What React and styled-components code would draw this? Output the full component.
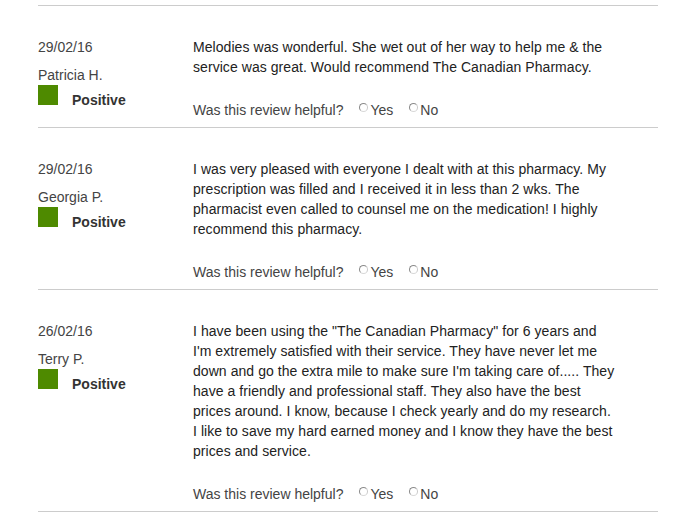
import React from 'react';
import styled, { createGlobalStyle } from 'styled-components';

const GlobalStyle = createGlobalStyle`
  body {
    margin: 0;
    background: #fff;
    font-family: 'Liberation Sans', Arial, sans-serif;
  }
`;

const List = styled.div`
  width: 620px;
  margin: 5px 0 0 38px;
  border-top: 1px solid #cccccc;
`;

const Review = styled.div`
  display: flex;
  padding: 31px 0 7px;
  border-bottom: 1px solid #cccccc;
`;

const Meta = styled.div`
  width: 155px;
  flex-shrink: 0;
  font-size: 14px;
  line-height: 20px;
  color: #444;
`;

const DateText = styled.div``;

const Author = styled.div`
  margin-top: 8px;
`;

const Rating = styled.div`
  display: flex;
  align-items: flex-start;
`;

const Swatch = styled.span`
  width: 20px;
  height: 20px;
  background: ${(p) => p.color};
`;

const RatingLabel = styled.span`
  margin: 5px 0 0 14px;
  font-weight: bold;
  color: #333;
`;

const Body = styled.div`
  width: 450px;
  font-size: 14px;
  line-height: 20px;
  letter-spacing: 0.06px;
`;

const Text = styled.p`
  margin: 0;
  color: #222;
`;

const Line = styled.span`
  display: block;
  white-space: nowrap;
`;

const Helpful = styled.div`
  display: flex;
  align-items: center;
  margin-top: 23px;
  color: #444;
  letter-spacing: 0;
`;

const Option = styled.label`
  display: inline-flex;
  align-items: center;
  margin-left: ${(p) => p.gap}px;
`;

const Radio = styled.span`
  width: 7px;
  height: 7px;
  margin: -5px 2px 0 0;
  border: 1px solid #8a8a8a;
  border-right-color: #c8c8c8;
  border-bottom-color: #d8d8d8;
  border-radius: 50%;
  background: #fff;
`;

const reviews = [
  {
    date: '29/02/16',
    name: 'Patricia H.',
    lines: [
      'Melodies was wonderful. She wet out of her way to help me & the',
      'service was great. Would recommend The Canadian Pharmacy.',
    ],
  },
  {
    date: '29/02/16',
    name: 'Georgia P.',
    lines: [
      'I was very pleased with everyone I dealt with at this pharmacy. My',
      'prescription was filled and I received it in less than 2 wks. The',
      'pharmacist even called to counsel me on the medication! I highly',
      'recommend this pharmacy.',
    ],
  },
  {
    date: '26/02/16',
    name: 'Terry P.',
    lines: [
      'I have been using the "The Canadian Pharmacy" for 6 years and',
      "I'm extremely satisfied with their service. They have never let me",
      "down and go the extra mile to make sure I'm taking care of..... They",
      'have a friendly and professional staff. They also have the best',
      'prices around. I know, because I check yearly and do my research.',
      'I like to save my hard earned money and I know they have the best',
      'prices and service.',
    ],
  },
];

const App = () => (
  <>
    <GlobalStyle />
    <List>
      {reviews.map((r, i) => (
        <Review key={i}>
          <Meta>
            <DateText>{r.date}</DateText>
            <Author>{r.name}</Author>
            <Rating>
              <Swatch color="#4e8a00" />
              <RatingLabel>Positive</RatingLabel>
            </Rating>
          </Meta>
          <Body>
            <Text>
              {r.lines.map((l, j) => (
                <Line key={j}>{l}</Line>
              ))}
            </Text>
            <Helpful>
              Was this review helpful?
              <Option gap={16}>
                <Radio />
                Yes
              </Option>
              <Option gap={16}>
                <Radio />
                No
              </Option>
            </Helpful>
          </Body>
        </Review>
      ))}
    </List>
  </>
);

export default App;
